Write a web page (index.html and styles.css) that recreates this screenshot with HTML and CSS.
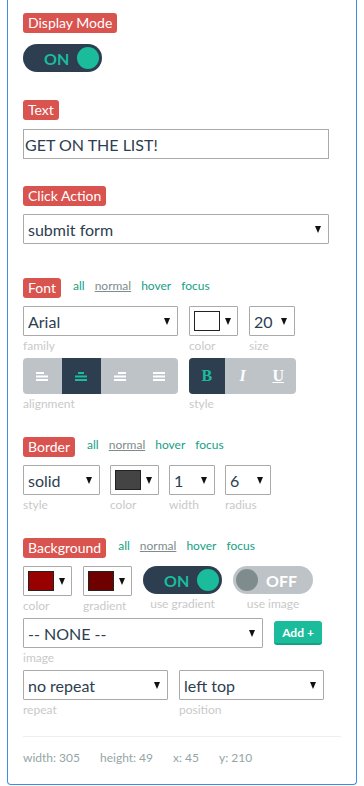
FILE: index.html
```html
<!DOCTYPE html>
<html lang="en">
<head>
    <meta charset="UTF-8">
    <meta name="viewport" content="width=device-width, initial-scale=1.0">
    <title>Button Settings</title>
    <link rel="stylesheet" href="styles.css">
</head>
<body>
    <div class="panel">
        <section class="group g-display">
            <div class="head"><span class="badge">Display Mode</span></div>
            <div class="body">
                <div class="toggle on"><span class="toggle-text">ON</span><span class="knob"></span></div>
            </div>
        </section>

        <section class="group g-text">
            <div class="head"><span class="badge">Text</span></div>
            <div class="body">
                <input class="text-input" type="text" value="GET ON THE LIST!">
            </div>
        </section>

        <section class="group g-click">
            <div class="head"><span class="badge">Click Action</span></div>
            <div class="body">
                <div class="select w-full"><span>submit form</span><span class="caret"></span></div>
            </div>
        </section>

        <section class="group g-font">
            <div class="head">
                <span class="badge">Font</span>
                <span class="states">
                    <a href="#">all</a>
                    <a href="#" class="current">normal</a>
                    <a href="#">hover</a>
                    <a href="#">focus</a>
                </span>
            </div>
            <div class="body">
                <div class="row">
                    <div class="field">
                        <div class="select w-family"><span>Arial</span><span class="caret"></span></div>
                        <span class="hint">family</span>
                    </div>
                    <div class="field">
                        <div class="select color-select"><span class="swatch white"></span><span class="caret"></span></div>
                        <span class="hint">color</span>
                    </div>
                    <div class="field">
                        <div class="select w-size"><span>20</span><span class="caret"></span></div>
                        <span class="hint">size</span>
                    </div>
                </div>
                <div class="row row-buttons">
                    <div class="field">
                        <div class="btn-group w-family">
                            <span class="gbtn">
                                <svg width="12" height="9" viewBox="0 0 12 9"><rect x="0" y="0" width="8" height="2"/><rect x="0" y="3.5" width="12" height="2"/><rect x="0" y="7" width="12" height="2"/></svg>
                            </span>
                            <span class="gbtn active">
                                <svg width="12" height="9" viewBox="0 0 12 9"><rect x="3" y="0" width="6" height="2"/><rect x="0" y="3.5" width="12" height="2"/><rect x="0" y="7" width="12" height="2"/></svg>
                            </span>
                            <span class="gbtn">
                                <svg width="12" height="9" viewBox="0 0 12 9"><rect x="4" y="0" width="8" height="2"/><rect x="0" y="3.5" width="12" height="2"/><rect x="0" y="7" width="12" height="2"/></svg>
                            </span>
                            <span class="gbtn">
                                <svg width="12" height="9" viewBox="0 0 12 9"><rect x="0" y="0" width="12" height="2"/><rect x="0" y="3.5" width="12" height="2"/><rect x="0" y="7" width="12" height="2"/></svg>
                            </span>
                        </div>
                        <span class="hint">alignment</span>
                    </div>
                    <div class="field">
                        <div class="btn-group w-style">
                            <span class="gbtn serif active"><b>B</b></span>
                            <span class="gbtn serif"><b><i>I</i></b></span>
                            <span class="gbtn serif"><b><u>U</u></b></span>
                        </div>
                        <span class="hint">style</span>
                    </div>
                </div>
            </div>
        </section>

        <section class="group g-border">
            <div class="head">
                <span class="badge">Border</span>
                <span class="states">
                    <a href="#">all</a>
                    <a href="#" class="current">normal</a>
                    <a href="#">hover</a>
                    <a href="#">focus</a>
                </span>
            </div>
            <div class="body">
                <div class="row row-border">
                    <div class="field">
                        <div class="select w-bstyle"><span>solid</span><span class="caret"></span></div>
                        <span class="hint">style</span>
                    </div>
                    <div class="field">
                        <div class="select color-select"><span class="swatch grey"></span><span class="caret"></span></div>
                        <span class="hint">color</span>
                    </div>
                    <div class="field">
                        <div class="select w-size"><span>1</span><span class="caret"></span></div>
                        <span class="hint">width</span>
                    </div>
                    <div class="field">
                        <div class="select w-size"><span>6</span><span class="caret"></span></div>
                        <span class="hint">radius</span>
                    </div>
                </div>
            </div>
        </section>

        <section class="group g-background">
            <div class="head">
                <span class="badge">Background</span>
                <span class="states">
                    <a href="#">all</a>
                    <a href="#" class="current">normal</a>
                    <a href="#">hover</a>
                    <a href="#">focus</a>
                </span>
            </div>
            <div class="body">
                <div class="row">
                    <div class="field">
                        <div class="select color-select"><span class="swatch red"></span><span class="caret"></span></div>
                        <span class="hint">color</span>
                    </div>
                    <div class="field">
                        <div class="select color-select"><span class="swatch darkred"></span><span class="caret"></span></div>
                        <span class="hint">gradient</span>
                    </div>
                    <div class="field center">
                        <div class="toggle on"><span class="toggle-text">ON</span><span class="knob"></span></div>
                        <span class="hint">use gradient</span>
                    </div>
                    <div class="field center">
                        <div class="toggle off"><span class="knob"></span><span class="toggle-text">OFF</span></div>
                        <span class="hint">use image</span>
                    </div>
                </div>
                <div class="row row-image">
                    <div class="field">
                        <div class="select w-image"><span>-- NONE --</span><span class="caret"></span></div>
                        <span class="hint">image</span>
                    </div>
                    <button class="add-btn">Add +</button>
                </div>
                <div class="row row-image">
                    <div class="field">
                        <div class="select w-half"><span>no repeat</span><span class="caret"></span></div>
                        <span class="hint">repeat</span>
                    </div>
                    <div class="field">
                        <div class="select w-half"><span>left top</span><span class="caret"></span></div>
                        <span class="hint">position</span>
                    </div>
                </div>
            </div>
        </section>

        <hr class="divider">

        <div class="footer">
            <span>width: 305</span>
            <span>height: 49</span>
            <span>x: 45</span>
            <span>y: 210</span>
        </div>
    </div>
</body>
</html>
```

FILE: styles.css
```css
:root {
    --badge-color: #d9534f;
    --dark-color: #2c3e50;
    --teal-color: #1abc9c;
    --link-color: #16a085;
    --hint-color: #c9c9c9;
    --panel-border: #3a8ee6;
}
body {
    margin: 0;
    font-family: Lato, "Open Sans", sans-serif;
    color: var(--dark-color);
    background: #fff;
}
.panel {
    margin-left: 7px;
    padding: 13px 15px 18px 15px;
    width: 318px;
    border: 1px solid var(--panel-border);
    border-top: none;
    border-radius: 0 0 4px 4px;
}
.g-display { margin-bottom: 28px; }
.g-text { margin-bottom: 27px; }
.g-click { margin-bottom: 34px; }
.g-font { margin-bottom: 29px; }
.g-border { margin-bottom: 29px; }

.head {
    display: flex;
    align-items: flex-start;
    height: 20px;
}
.badge {
    display: inline-block;
    height: 20px;
    line-height: 20px;
    padding: 0 5px;
    background: var(--badge-color);
    color: #fff;
    font-size: 14px;
    border-radius: 3px;
}
.states {
    display: flex;
    gap: 10px;
    margin-left: 12px;
    line-height: 16px;
    font-size: 12px;
}
.states a {
    color: var(--link-color);
    text-decoration: none;
}
.states a.current {
    color: #7f8c8d;
    text-decoration: underline;
}
.body {
    margin-top: 8px;
}
.g-display .body { margin-top: 11px; }
.g-text .body { margin-top: 9px; }

.text-input {
    display: block;
    width: 306px;
    height: 30px;
    box-sizing: border-box;
    border: 1px solid #aaa;
    padding: 0 1px;
    font-family: Lato, sans-serif;
    font-size: 16px;
    color: var(--dark-color);
    outline: none;
}

.select {
    height: 30px;
    box-sizing: border-box;
    border: 1px solid #aaa;
    border-radius: 1px;
    display: flex;
    align-items: center;
    justify-content: space-between;
    padding: 0 7px 0 4px;
    font-size: 16px;
    color: var(--dark-color);
    background: #fff;
}
.caret {
    width: 0;
    height: 0;
    border-left: 3.5px solid transparent;
    border-right: 3.5px solid transparent;
    border-top: 7px solid #111;
}
.w-full { width: 306px; }
.w-family { width: 155px; }
.w-size { width: 46px; }
.w-bstyle { width: 77px; }
.w-image { width: 240px; }
.w-half { width: 145px; }
.w-style { width: 107px; }

.color-select {
    width: 49px;
    padding: 0 6px 0 4px;
}
.swatch {
    width: 26px;
    height: 20px;
    box-sizing: border-box;
    border: 1px solid #222;
}
.swatch.white { background: #fff; }
.swatch.grey { background: #444; }
.swatch.red { background: #990000; }
.swatch.darkred { background: #6e0000; }

.row {
    display: flex;
    gap: 11px;
}
.row-border {
    gap: 10px;
}
.row-buttons,
.row-image {
    margin-top: 8px;
}
.row-image {
    align-items: flex-start;
}
.field {
    display: flex;
    flex-direction: column;
}
.field.center {
    align-items: center;
}
.hint {
    height: 14px;
    line-height: 19px;
    font-size: 12px;
    color: var(--hint-color);
}

.btn-group {
    display: flex;
    height: 36px;
    border-radius: 4px;
    overflow: hidden;
    background: #bdc3c7;
}
.gbtn {
    flex: 1;
    display: flex;
    align-items: center;
    justify-content: center;
    fill: #fff;
    color: #fff;
}
.gbtn.active {
    background: #2c3e50;
    fill: var(--teal-color);
    color: var(--teal-color);
}
.gbtn.serif {
    font-family: "Liberation Serif", serif;
    font-size: 16px;
}

.toggle {
    width: 79px;
    height: 28px;
    box-sizing: border-box;
    border-radius: 14px;
    display: flex;
    align-items: center;
    justify-content: space-between;
    padding: 0 3px;
    font-size: 16px;
    font-weight: bold;
}
.toggle.on {
    background: #2c3e50;
    color: var(--teal-color);
    padding-left: 21px;
}
.toggle.off {
    background: #bdc3c7;
    color: #fff;
    width: 80px;
    padding-right: 16px;
}
.knob {
    width: 22px;
    height: 22px;
    border-radius: 50%;
    background: var(--teal-color);
}
.toggle.off .knob {
    background: #7f8c8d;
}

.add-btn {
    margin-top: 3px;
    width: 48px;
    height: 24px;
    border: none;
    border-bottom: 2px solid #16a085;
    border-radius: 3px;
    background: var(--teal-color);
    color: #fff;
    font-family: Lato, sans-serif;
    font-size: 12px;
    font-weight: bold;
    padding: 0;
}

.divider {
    margin: 22px 0 0 0;
    border: none;
    border-top: 1px solid #eee;
}
.footer {
    display: flex;
    gap: 20px;
    margin-top: 13px;
    line-height: 16px;
    font-size: 12px;
    color: #95a5a6;
}
```
